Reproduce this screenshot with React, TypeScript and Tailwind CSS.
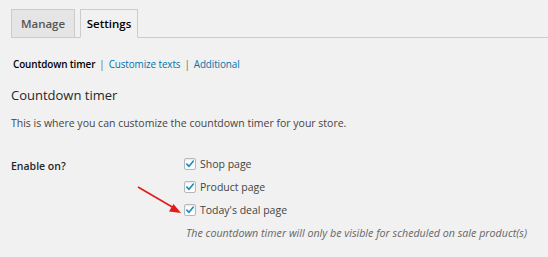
import React from 'react';

const options = ['Shop page', 'Product page', "Today's deal page"];

function CheckBox() {
  return (
    <span className="flex h-[12px] w-[12px] items-center justify-center rounded-[2px] border border-[#b4b9be] bg-white shadow-[inset_0_1px_2px_rgba(0,0,0,0.1)]">
      <svg viewBox="0 0 12 12" className="h-[10px] w-[10px]">
        <path d="M2.2 6.2 L4.8 8.8 L9.8 2.6" fill="none" stroke="#1e8cbe" strokeWidth="2" strokeLinecap="round" strokeLinejoin="round" />
      </svg>
    </span>
  );
}

export default function App() {
  return (
    <div className="relative h-[257px] w-[548px] overflow-hidden bg-[#f1f1f1] font-['Open_Sans',sans-serif] text-[#23282d]">
      {/* tabs */}
      <div className="ml-[11px] flex gap-[5px] border-b border-[#ccc] pt-[9px]">
        <div className="-mb-px flex h-[29px] w-[64px] items-center justify-center border border-[#ccc] bg-[#e5e5e5] pt-[1px] text-[11.5px] font-semibold text-[#555]">
          Manage
        </div>
        <div className="-mb-px flex h-[29px] w-[58px] items-center justify-center border border-[#ccc] border-b-[#f1f1f1] bg-[#f1f1f1] pt-[1px] text-[11.5px] font-semibold text-black">
          Settings
        </div>
      </div>

      {/* sub navigation */}
      <div className="ml-[13px] mt-[19px] flex items-center gap-[4px] text-[9.9px] leading-[14px] tracking-[-0.1px]">
        <span className="font-semibold text-black">Countdown timer</span>
        <span className="text-[#666]">|</span>
        <span className="text-[#0073aa]">Customize texts</span>
        <span className="text-[#666]">|</span>
        <span className="text-[#0073aa]">Additional</span>
      </div>

      <h2 className="ml-[11px] mt-[15px] text-[13px] leading-[18px] text-[#23282d]">Countdown timer</h2>
      <p className="ml-[11px] mt-[12px] text-[10.5px] leading-[14px] text-[#444]">
        This is where you can customize the countdown timer for your store.
      </p>

      {/* form */}
      <div className="ml-[11px] mt-[27px] flex">
        <div className="w-[173px] pt-[2px] text-[10.5px] font-semibold leading-[14px] text-[#23282d]">Enable on?</div>
        <div className="flex flex-col">
          <div className="flex flex-col gap-[9px]">
            {options.map((o) => (
              <label key={o} className="flex items-center gap-[4px] text-[10.5px] leading-[14px] text-[#444]">
                <CheckBox />
                {o}
              </label>
            ))}
          </div>
          <p className="mt-[9px] ml-[2px] text-[10.7px] italic leading-[14px] text-[#666]">
            The countdown timer will only be visible for scheduled on sale product(s)
          </p>
        </div>
      </div>

      {/* annotation arrow */}
      <svg className="absolute left-[136px] top-[185px]" width="48" height="32" viewBox="0 0 48 32">
        <line x1="2" y1="2" x2="38" y2="23" stroke="#e21b1b" strokeWidth="1.6" />
        <path d="M45 28 L33 26.5 L37.5 19 Z" fill="#e21b1b" />
      </svg>
    </div>
  );
}
